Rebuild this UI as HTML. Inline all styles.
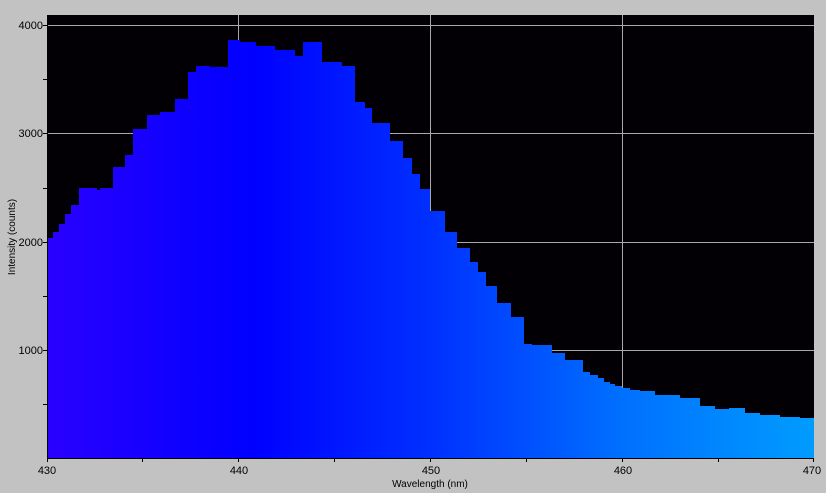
<!DOCTYPE html>
<html><head><style>
html,body{margin:0;padding:0;background:#c2c2c2;}
svg{display:block;font-family:"Liberation Sans",sans-serif;}
</style></head><body>
<svg width="826" height="493" viewBox="0 0 826 493">
<defs>
<linearGradient id="g" x1="47" y1="0" x2="814" y2="0" gradientUnits="userSpaceOnUse">
<stop offset="0" stop-color="#2a00ff"/>
<stop offset="0.27" stop-color="#0000ff"/>
<stop offset="0.5" stop-color="#0030ff"/>
<stop offset="0.75" stop-color="#0070ff"/>
<stop offset="1" stop-color="#009cff"/>
</linearGradient>
</defs>
<rect x="0" y="0" width="826" height="493" fill="#c2c2c2"/>
<rect x="47" y="15" width="767" height="443" fill="#030005"/>
<g stroke="#a8a8a8" stroke-width="1">
<line x1="47" y1="25.5" x2="814" y2="25.5"/>
<line x1="47" y1="133.5" x2="814" y2="133.5"/>
<line x1="47" y1="242.5" x2="814" y2="242.5"/>
<line x1="47" y1="350.5" x2="814" y2="350.5"/>
<line x1="238.5" y1="15" x2="238.5" y2="458"/>
<line x1="430.5" y1="15" x2="430.5" y2="458"/>
<line x1="622.5" y1="15" x2="622.5" y2="458"/>
</g>
<polygon fill="url(#g)" points="47,458 47,238 53,238 53,232 59,232 59,224 65,224 65,214 71,214 71,205 79,205 79,188 97,188 97,190 100,190 100,188 113,188 113,167 125,167 125,155 133,155 133,129 147,129 147,115 160,115 160,112 175,112 175,99 188,99 188,72 196,72 196,66 210,66 210,67 228,67 228,40 240,40 240,42 256,42 256,46 275,46 275,50 295,50 295,56 303,56 303,42 322,42 322,62 342,62 342,66 355,66 355,102 365,102 365,108 372,108 372,123 390,123 390,141 403,141 403,158 412,158 412,174 420,174 420,189 430,189 430,211 445,211 445,232 457,232 457,248 470,248 470,262 478,262 478,272 486,272 486,286 497,286 497,303 511,303 511,317 524,317 524,344 532,344 532,345 552,345 552,353 565,353 565,360 583,360 583,372 590,372 590,375 598,375 598,378 604,378 604,382 610,382 610,384 615,384 615,386 622,386 622,388 630,388 630,390 640,390 640,391 655,391 655,395 680,395 680,398 700,398 700,406 715,406 715,409 729,409 729,408 745,408 745,413 760,413 760,415 780,415 780,417 800,417 800,418 814,418 814,458"/>
<g stroke="#000" stroke-width="1">
<line x1="47" y1="458.5" x2="814" y2="458.5"/>
<line x1="47.5" y1="458" x2="47.5" y2="15"/>
<line x1="43" y1="25.5" x2="47" y2="25.5"/>
<line x1="43" y1="79.5" x2="47" y2="79.5"/>
<line x1="43" y1="133.5" x2="47" y2="133.5"/>
<line x1="43" y1="188.5" x2="47" y2="188.5"/>
<line x1="43" y1="242.5" x2="47" y2="242.5"/>
<line x1="43" y1="296.5" x2="47" y2="296.5"/>
<line x1="43" y1="350.5" x2="47" y2="350.5"/>
<line x1="43" y1="404.5" x2="47" y2="404.5"/>
<line x1="47.5" y1="458" x2="47.5" y2="462"/>
<line x1="142.5" y1="458" x2="142.5" y2="462"/>
<line x1="238.5" y1="458" x2="238.5" y2="462"/>
<line x1="334.5" y1="458" x2="334.5" y2="462"/>
<line x1="430.5" y1="458" x2="430.5" y2="462"/>
<line x1="526.5" y1="458" x2="526.5" y2="462"/>
<line x1="622.5" y1="458" x2="622.5" y2="462"/>
<line x1="718.5" y1="458" x2="718.5" y2="462"/>
<line x1="813.5" y1="458" x2="813.5" y2="462"/>
</g>
<g font-size="11" fill="#000" text-anchor="end">
<text x="43" y="29">4000</text>
<text x="43" y="137">3000</text>
<text x="43" y="246">2000</text>
<text x="43" y="354">1000</text>
</g>
<g font-size="11" fill="#000" text-anchor="middle">
<text x="47" y="474">430</text>
<text x="239" y="474">440</text>
<text x="431" y="474">450</text>
<text x="623" y="474">460</text>
<text x="812" y="474">470</text>
<text x="430" y="487" font-size="10">Wavelength (nm)</text>
</g>
<text x="0" y="0" font-size="10" text-anchor="middle" transform="translate(15,237) rotate(-90)">Intensity (counts)</text>
</svg>
</body></html>
